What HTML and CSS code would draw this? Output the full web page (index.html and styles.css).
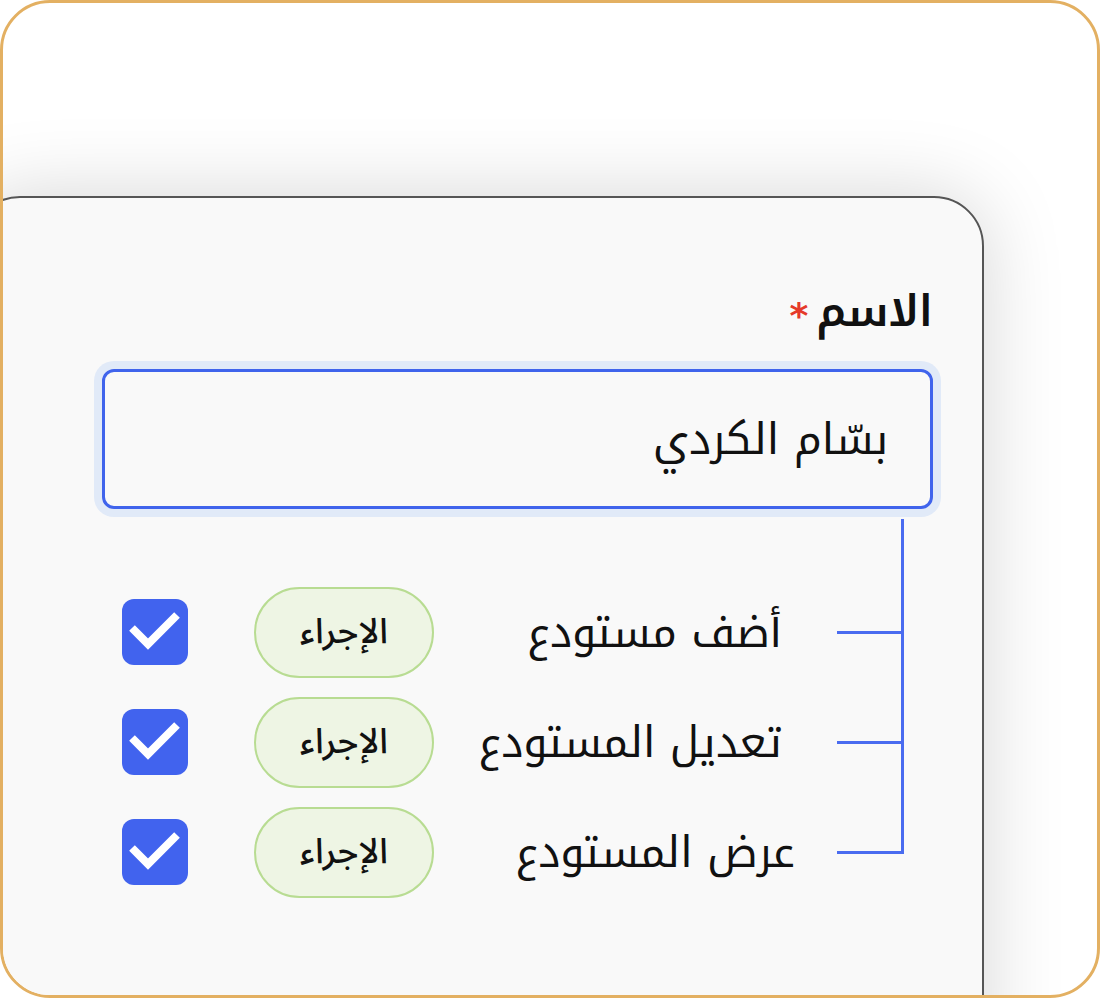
FILE: index.html
```html
<!DOCTYPE html>
<html lang="ar">
<head>
<meta charset="utf-8">
<title>Permissions</title>
<link rel="stylesheet" href="styles.css">
</head>
<body>
<div class="frame">
  <div class="card">
    <div class="content">
      <div class="field-label"><span class="label-text">الاسم</span><span class="req">*</span></div>
      <div class="input"><span class="input-text">بسّام الكردي</span></div>
      <div class="tree">
        <div class="row">
          <div class="check"><svg viewBox="0 0 66 66" width="66" height="66"><polyline points="10,29 26,45 55,16" fill="none" stroke="#fff" stroke-width="8"/></svg></div>
          <div class="pill">الإجراء</div>
          <div class="row-label">أضف مستودع</div>
          <div class="branch"></div>
        </div>
        <div class="row">
          <div class="check"><svg viewBox="0 0 66 66" width="66" height="66"><polyline points="10,29 26,45 55,16" fill="none" stroke="#fff" stroke-width="8"/></svg></div>
          <div class="pill">الإجراء</div>
          <div class="row-label">تعديل المستودع</div>
          <div class="branch"></div>
        </div>
        <div class="row">
          <div class="check"><svg viewBox="0 0 66 66" width="66" height="66"><polyline points="10,29 26,45 55,16" fill="none" stroke="#fff" stroke-width="8"/></svg></div>
          <div class="pill">الإجراء</div>
          <div class="row-label row-label--wide">عرض المستودع</div>
          <div class="branch"></div>
        </div>
      </div>
    </div>
  </div>
</div>
</body>
</html>
```

FILE: styles.css
```css
* { box-sizing: border-box; }
html, body { margin: 0; padding: 0; background: #ffffff; }
body { font-family: "Noto Kufi Arabic", "Noto Sans Arabic", "DejaVu Sans", sans-serif; color: #111; }

.frame {
  width: 1100px;
  height: 998px;
  border: 3px solid #e3b062;
  border-radius: 50px;
  background: #ffffff;
  overflow: hidden;
}

.card {
  margin-top: 193px;
  margin-left: -33px;
  width: 1014px;
  height: 900px;
  background: #f9f9f9;
  border: 2px solid #555555;
  border-radius: 50px;
  box-shadow: 0 0 80px rgba(0, 0, 0, 0.17);
  padding-top: 90px;
}

.content {
  width: 831px;
  margin-left: auto;
  margin-right: 49px;
  direction: rtl;
}

.field-label {
  display: flex;
  align-items: flex-start;
  gap: 8px;
  font-size: 43px;
  line-height: 48px;
  font-weight: 600;
  color: #111;
}
.req { color: #e53a2a; font-size: 36px; line-height: 36px; font-weight: 700; font-family: "DejaVu Sans", sans-serif; padding-top: 10px; }

.input {
  margin-top: 33px;
  height: 140px;
  border: 3px solid #4064ec;
  border-radius: 12px;
  box-shadow: 0 0 0 8px #e1eaf8;
  display: flex;
  align-items: center;
  padding-right: 42px;
  font-size: 43px;
  color: #111;
}

.tree {
  position: relative;
  margin-top: 10px;
  padding-top: 58px;
  padding-right: 29px;
}
.tree::before {
  content: "";
  position: absolute;
  right: 29px;
  top: 0;
  bottom: 55px;
  width: 3px;
  background: #4a6cf0;
}

.row {
  direction: ltr;
  display: grid;
  grid-template-columns: 66px 246px 1fr 67px;
  align-items: center;
  height: 110px;
  padding-left: 20px;
}

.check {
  width: 66px;
  height: 66px;
  border-radius: 12px;
  background: #4163ee;
}
.check svg { display: block; }

.pill {
  margin-left: 66px;
  width: 180px;
  height: 91px;
  border: 2px solid #b8dc92;
  background: #eef5e4;
  border-radius: 46px;
  display: flex;
  align-items: center;
  justify-content: center;
  font-family: "Noto Sans Arabic", "DejaVu Sans", sans-serif;
  font-size: 35px;
  font-weight: 500;
  color: #111;
}

.row-label {
  direction: rtl;
  text-align: right;
  font-size: 43px;
  margin-right: 55px;
  color: #111;
}
.row-label--wide { margin-right: 42px; }

.branch {
  height: 3px;
  background: #4a6cf0;
}
```
